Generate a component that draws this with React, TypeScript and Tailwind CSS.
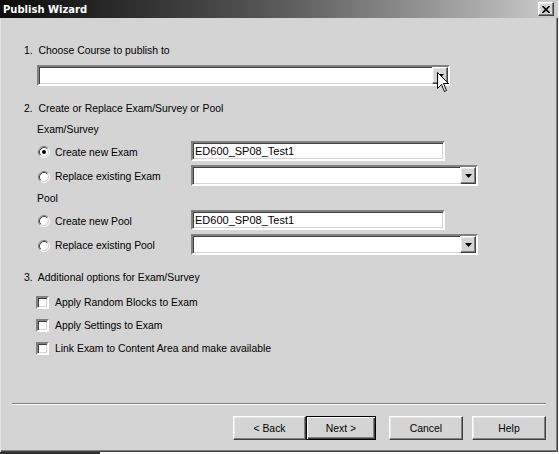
import React from 'react';

const sunken =
  'border-2 border-t-[#808080] border-l-[#808080] border-b-white border-r-white shadow-[inset_1px_1px_0_#404040,inset_-1px_-1px_0_#d4d4d4] bg-white';

const raised =
  'bg-[#d4d4d4] border border-t-white border-l-white border-b-[#404040] border-r-[#404040] shadow-[inset_-1px_-1px_0_#808080,inset_1px_1px_0_#e8e8e8]';

function Radio({ checked }: { checked?: boolean }) {
    return (
        <svg width="12" height="12" viewBox="0 0 12 12" className="shrink-0">
            <circle cx="6" cy="6" r="4.5" fill="#fff" />
            <path d="M2.11 9.89 A5.5 5.5 0 0 1 9.89 2.11" stroke="#808080" fill="none" />
            <path d="M2.82 9.18 A4.5 4.5 0 0 1 9.18 2.82" stroke="#404040" fill="none" />
            <path d="M2.11 9.89 A5.5 5.5 0 0 0 9.89 2.11" stroke="#ffffff" fill="none" />
            <path d="M2.82 9.18 A4.5 4.5 0 0 0 9.18 2.82" stroke="#d4d4d4" fill="none" />
            {checked && <circle cx="6" cy="6" r="2" fill="#000" />}
        </svg>
    );
}

function Checkbox() {
    return <div className={`w-[13px] h-[13px] shrink-0 ${sunken}`} />;
}

function DropArrow() {
    return (
        <div className={`w-[16px] h-full shrink-0 flex items-center justify-center ${raised}`}>
            <svg width="7" height="4" viewBox="0 0 7 4">
                <path d="M0 0 H7 L3.5 4 Z" fill="#000" />
            </svg>
        </div>
    );
}

function Combo({ width }: { width: string }) {
    return (
        <div className={`${width} h-[21px] flex justify-end ${sunken}`}>
            <DropArrow />
        </div>
    );
}

function TextField({ value }: { value: string }) {
    return (
        <div className={`w-[254px] h-[20px] flex items-center pl-[2px] text-[11px] text-black ${sunken}`}>
            {value}
        </div>
    );
}

function OptionRow({ label, checked, children }: { label: string; checked?: boolean; children: React.ReactNode }) {
    return (
        <div className="flex items-center ml-[14px]">
            <div className="w-[153px] flex items-center gap-[5px] pt-[2px]">
                <Radio checked={checked} />
                <span>{label}</span>
            </div>
            {children}
        </div>
    );
}

function CheckRow({ label }: { label: string }) {
    return (
        <div className="flex items-center gap-[6px] ml-[12px] h-[13px]">
            <Checkbox />
            <span>{label}</span>
        </div>
    );
}

function Button({ label, width, isDefault }: { label: string; width: string; isDefault?: boolean }) {
    return (
        <div
            className={`${width} h-[24px] flex items-center justify-center bg-[#d4d4d4] border ${
                isDefault
                    ? 'border-black shadow-[inset_1px_1px_0_#fff,inset_-1px_-1px_0_#404040,inset_-2px_-2px_0_#808080]'
                    : 'border-t-white border-l-white border-b-[#404040] border-r-[#404040] shadow-[inset_-1px_-1px_0_#808080,inset_1px_1px_0_#e8e8e8]'
            }`}
        >
            {label}
        </div>
    );
}

function Cursor() {
    return (
        <svg width="13" height="21" viewBox="0 0 13 21" className="absolute left-[437px] top-[72px]">
            <path
                d="M0.5 0.5 L0.5 16.5 L4.5 12.5 L7.5 19.5 L9.5 18.5 L6.5 11.5 L11.5 11.5 Z"
                fill="#fff"
                stroke="#000"
                strokeLinejoin="miter"
            />
        </svg>
    );
}

export default function App() {
    return (
        <div className="w-[559px] h-[454px] bg-white relative overflow-hidden font-['Liberation_Sans',Arial,sans-serif] text-[10.4px] leading-[13px] text-black">
            <div className="w-[558px] h-[452px] bg-[#d4d4d4] flex flex-col shadow-[inset_1px_0_0_#e4e4e4,inset_-1px_0_0_#404040,inset_-2px_0_0_#808080,inset_0_-1px_0_#404040,inset_0_-2px_0_#808080]">
                {/* title bar */}
                <div className="h-[18px] bg-gradient-to-r from-[#0c0c0c] via-[#5a5a5a] to-[#cdcdcd] flex items-center justify-between pl-[3px] pr-[4px]">
                    <span className="font-['DejaVu_Sans',Verdana,sans-serif] font-bold text-[10px] text-white">Publish Wizard</span>
                    <div className={`w-[16px] h-[14px] flex items-center justify-center ${raised}`}>
                        <svg width="8" height="7" viewBox="0 0 8 7">
                            <path d="M0.5 0 L7.5 7 M7.5 0 L0.5 7" stroke="#000" strokeWidth="1.6" />
                        </svg>
                    </div>
                </div>

                <div className="flex flex-col pl-[24px] pt-[26px]">
                    <div>1.&nbsp; Choose Course to publish to</div>
                    <div className="mt-[8px] ml-[13px]">
                        <Combo width="w-[413px]" />
                    </div>

                    <div className="mt-[16px]">2.&nbsp; Create or Replace Exam/Survey or Pool</div>
                    <div className="mt-[8px] ml-[13px]">Exam/Survey</div>
                    <div className="mt-[5px]">
                        <OptionRow label="Create new Exam" checked>
                            <TextField value="ED600_SP08_Test1" />
                        </OptionRow>
                    </div>
                    <div className="mt-[4px]">
                        <OptionRow label="Replace existing Exam">
                            <Combo width="w-[287px]" />
                        </OptionRow>
                    </div>
                    <div className="mt-[6px] ml-[13px]">Pool</div>
                    <div className="mt-[5px]">
                        <OptionRow label="Create new Pool">
                            <TextField value="ED600_SP08_Test1" />
                        </OptionRow>
                    </div>
                    <div className="mt-[4px]">
                        <OptionRow label="Replace existing Pool">
                            <Combo width="w-[287px]" />
                        </OptionRow>
                    </div>

                    <div className="mt-[16px]">3.&nbsp; Additional options for Exam/Survey</div>
                    <div className="mt-[12px] flex flex-col gap-[10px]">
                        <CheckRow label="Apply Random Blocks to Exam" />
                        <CheckRow label="Apply Settings to Exam" />
                        <CheckRow label="Link Exam to Content Area and make available" />
                    </div>
                </div>

                <div className="mt-auto mx-[12px] h-[2px] border-t border-t-[#808080] border-b border-b-white" />
                <div className="mt-[11px] mb-[12px] pr-[12px] flex justify-end">
                    <Button label="< Back" width="w-[73px]" />
                    <Button label="Next >" width="w-[70px]" isDefault />
                    <div className="w-[13px]" />
                    <Button label="Cancel" width="w-[74px]" />
                    <div className="w-[9px]" />
                    <Button label="Help" width="w-[74px]" />
                </div>
            </div>
            <div className="flex h-[2px]">
                <div className="w-[100px] bg-[#303030]" />
            </div>
            <Cursor />
        </div>
    );
}
